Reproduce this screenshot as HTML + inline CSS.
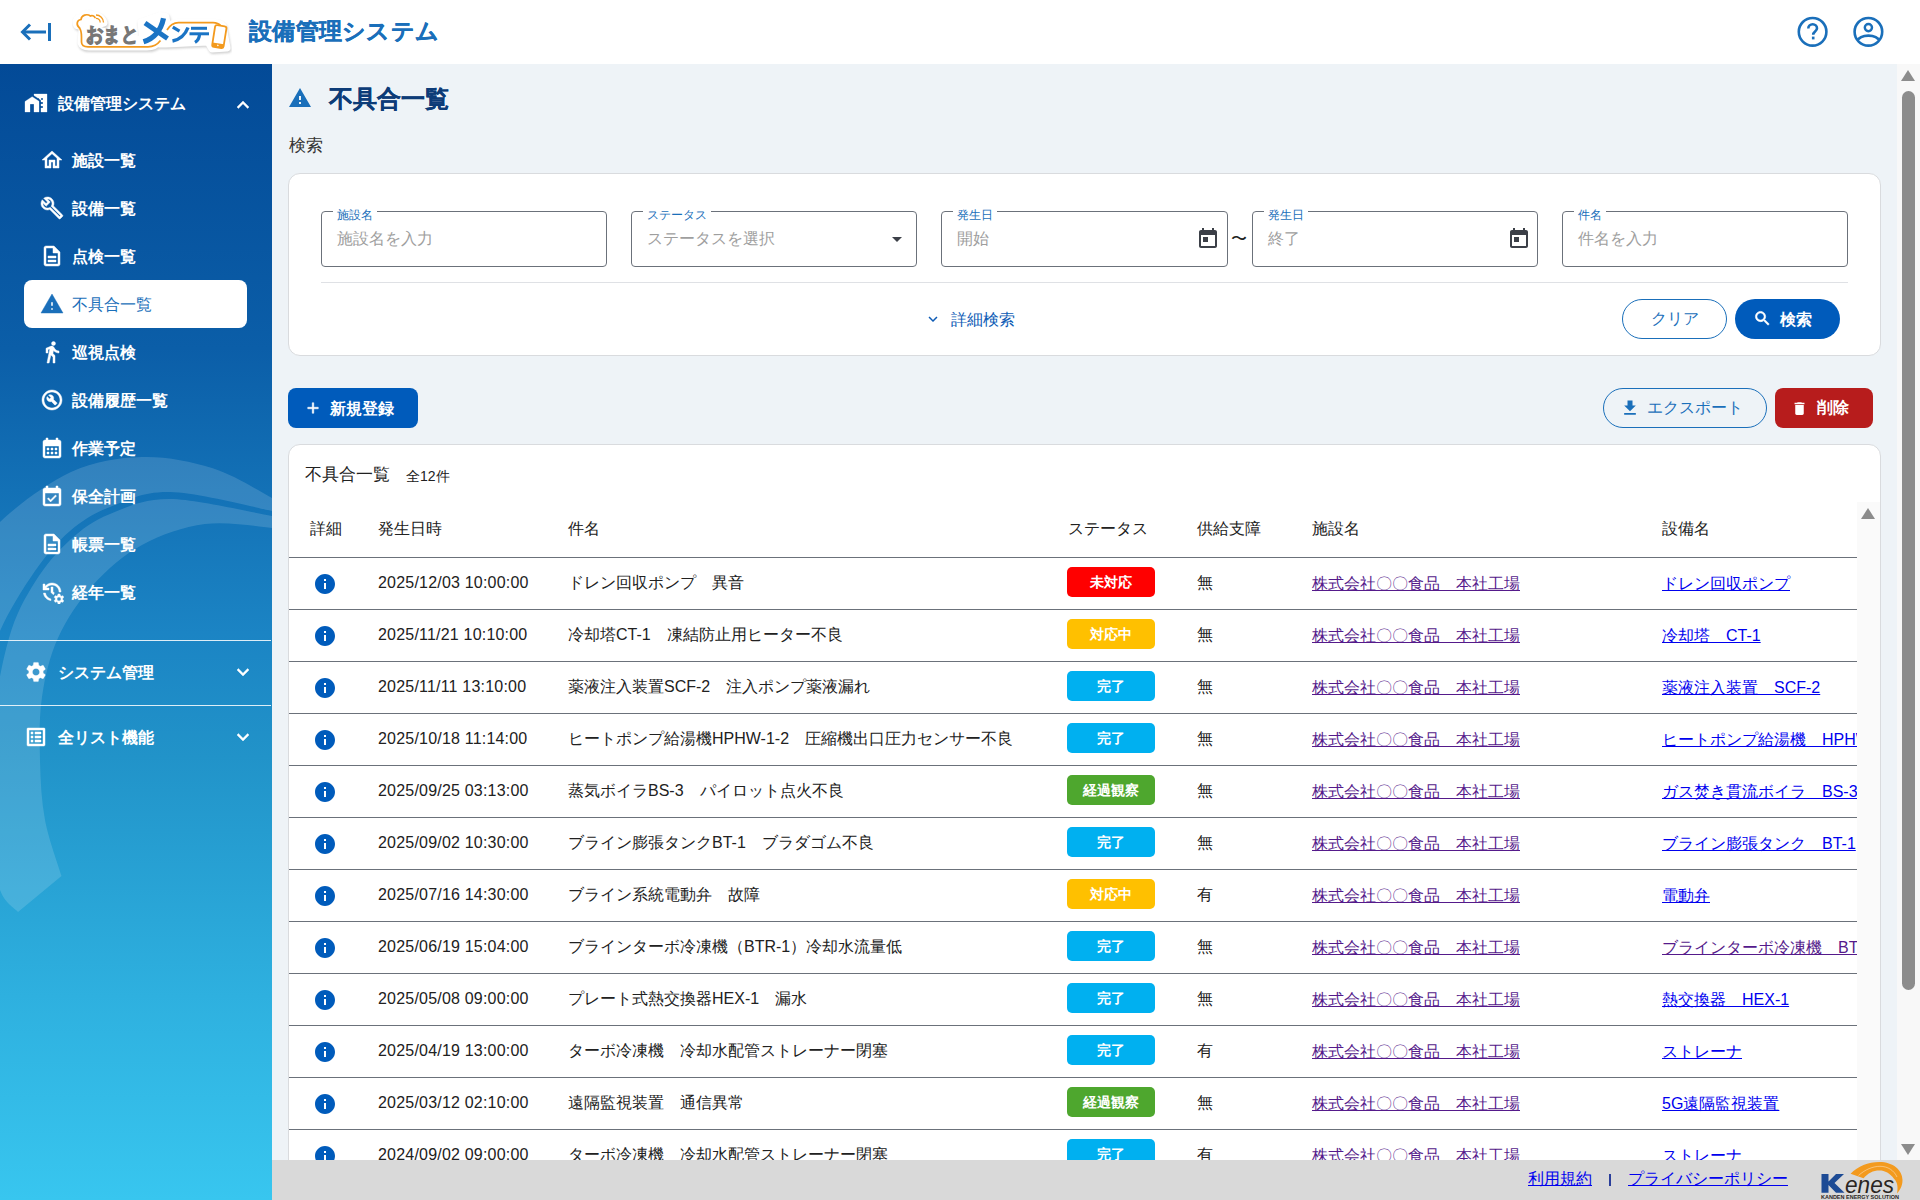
<!DOCTYPE html>
<html lang="ja">
<head>
<meta charset="utf-8">
<style>
*{box-sizing:border-box;margin:0;padding:0}
html,body{width:1920px;height:1200px;overflow:hidden;background:#fff}
body{font-family:"Liberation Sans",sans-serif;color:#212121;position:relative;font-size:16px}
.abs{position:absolute}
svg{display:block}
#hdr{position:absolute;left:0;top:0;width:1920px;height:64px;background:#fff}
#hdr .title{position:absolute;left:249px;top:16px;font-size:23.4px;letter-spacing:0.3px;line-height:30px;font-weight:bold;color:#1a6fba;white-space:nowrap;-webkit-text-stroke:0.35px #1a6fba}
#side{position:absolute;left:0;top:64px;width:272px;height:1136px;overflow:hidden;
 background:linear-gradient(180deg,#034a97 0%,#0b5ea8 25%,#1b84c4 50%,#2193c9 61%,#2eb0df 82%,#38c6ef 100%)}
#side .it,#side .grp{position:absolute;left:0;width:272px;height:48px;color:#fff;font-size:16px;line-height:48px;white-space:nowrap}
#side .it span{position:absolute;left:72px;top:1px;font-weight:bold}
#side .grp span{position:absolute;left:58px;top:1px;font-weight:bold}
#side .it.on span{color:#1a6fba;font-weight:normal}
#side .sel{position:absolute;left:24px;top:216px;width:223px;height:48px;background:#fff;border-radius:8px}
#side .sep{position:absolute;left:0;width:271px;height:1px;background:rgba(255,255,255,.85)}
#main{position:absolute;left:272px;top:64px;width:1625px;height:1096px;background:#eef3f7}
#pscroll{position:absolute;left:1897px;top:64px;width:23px;height:1096px;background:#f8f8f8}
#pscroll .thumb{position:absolute;left:5px;top:27px;width:13px;height:899px;background:#8c8c8c;border-radius:7px}
#pscroll .up{position:absolute;left:4px;top:6px;width:0;height:0;border-left:7.5px solid transparent;border-right:7.5px solid transparent;border-bottom:11px solid #8c8c8c}
#pscroll .dn{position:absolute;left:4px;top:1080px;width:0;height:0;border-left:7.5px solid transparent;border-right:7.5px solid transparent;border-top:11px solid #8c8c8c}
#foot{position:absolute;left:272px;top:1160px;width:1648px;height:40px;background:#d9d9d9}
.h1{position:absolute;left:329px;top:84px;font-size:24px;line-height:30px;font-weight:bold;color:#0d3c78;white-space:nowrap;-webkit-text-stroke:0.2px #0d3c78}
.card{position:absolute;background:#fff;border:1px solid #d9dbde;border-radius:12px}
.fld{position:absolute;top:211px;height:56px;width:286px;border:1px solid #6b717a;border-radius:4px}
.fld .lb{position:absolute;left:11px;top:-4px;padding:0 4px;background:#fff;font-size:12px;line-height:14px;color:#1a6fba;white-space:nowrap}
.fld .ph{position:absolute;left:15px;top:17px;font-size:16px;line-height:20px;color:#9e9e9e;white-space:nowrap}
.btn{position:absolute;height:40px;line-height:40px;font-size:16px;white-space:nowrap;font-weight:bold}
.tbl{position:absolute;left:289px;top:502px;width:1568px;height:700px;overflow:hidden}
.th{position:absolute;font-size:16px;line-height:20px;color:#212121;white-space:nowrap}
.row{position:absolute;left:0;width:1568px;height:52px;border-top:1px solid #6b717a}
.row .c{position:absolute;top:15px;font-size:16px;line-height:20px;white-space:nowrap}
.badge{position:absolute;left:778px;top:9px;width:88px;height:30px;border-radius:5px;color:#fff;font-size:14px;line-height:30px;text-align:center;font-weight:bold}
a{color:#0000ee;text-decoration:underline}
a.v{color:#551a8b}

</style>
</head>
<body>

<div id="hdr">
<svg class="abs" style="left:18px;top:20px" width="36" height="24" viewBox="0 0 36 24">
<path d="M5 12H28" stroke="#1a6fba" stroke-width="3" fill="none"/>
<path d="M12 4.5L4.5 12L12 19.5" stroke="#1a6fba" stroke-width="3" fill="none"/>
<rect x="30" y="3" width="3" height="18" fill="#1a6fba"/></svg>
<svg class="abs" style="left:72px;top:8px" width="160" height="50" viewBox="72 8 160 50">
<defs><filter id="lsh" x="-10%" y="-20%" width="120%" height="150%"><feGaussianBlur stdDeviation="0.9"/></filter></defs>
<g transform="translate(0.8,1.6)" filter="url(#lsh)" fill="#cfcfcf" stroke="#cfcfcf" stroke-width="7" stroke-linejoin="round">
<path d="M77 25.5C74 21 78 16.5 82 18C83 13.5 89 12 93 15C97 14 103 18 104 23L82 30L81 43C82 46 85 47 89 47H147C153 47 157 45 160 41L166 30C169 25 172 22.6 178 22.6H214C218 22.6 221 24 223 26L227 48L212 49L208 42L166 44L160 44Z"/>
<path d="M141 22L160 15.5L166 16.5L169 38L143 44Z"/>
</g>
<g fill="#fff" stroke="#fff" stroke-width="7" stroke-linejoin="round">
<path d="M77 25.5C74 21 78 16.5 82 18C83 13.5 89 12 93 15C97 14 103 18 104 23L82 30L81 43C82 46 85 47 89 47H147C153 47 157 45 160 41L166 30C169 25 172 22.6 178 22.6H214C218 22.6 221 24 223 26L227 48L212 49L208 42L166 44L160 44Z"/>
<path d="M141 22L160 15.5L166 16.5L169 38L143 44Z"/>
</g>
<path d="M79.5 28C76 25 76.5 20 81 19.5C81.5 15 87 13.5 90.5 16C92 15 94 16 95 17.5" stroke="#f39a1e" stroke-width="1.7" fill="none" stroke-linecap="round"/>
<path d="M79.5 28C81 30 81.5 33 81.5 37V42C81.5 45 84 46.8 88 46.8H148C154 46.8 157.5 44.5 160.5 40.5" stroke="#f39a1e" stroke-width="1.7" fill="none"/>
<path d="M167 30C170 25 173 22.6 178.5 22.6H213C216 22.6 219 23.6 221 26" stroke="#f39a1e" stroke-width="1.7" fill="none"/>
<path d="M96 15A7.5 7.5 0 0 1 103.5 22.5M96 18.3A4.2 4.2 0 0 1 100.2 22.5" stroke="#f39a1e" stroke-width="1.3" fill="none"/>
<g transform="rotate(9 219 37)"><rect x="213.5" y="25.5" width="11.5" height="22" rx="2" fill="#fff" stroke="#f39a1e" stroke-width="1.8"/><rect x="213.5" y="43.5" width="11.5" height="4" fill="#f39a1e"/><circle cx="219.2" cy="45.5" r="0.8" fill="#fff"/></g>
<text x="85.5" y="40.5" font-family="Liberation Sans" font-size="19.5" font-weight="bold" fill="#777" stroke="#777" stroke-width="1.2" textLength="52.5" lengthAdjust="spacingAndGlyphs">おまと</text>
<g stroke="#1b74c5" fill="none" stroke-linecap="butt">
<path d="M163.5 18.2C161 30 154 38.5 143.5 41.8" stroke-width="5.2"/>
<path d="M145 23L167.5 38.5" stroke-width="5"/>
<path d="M172.8 27.2L179.5 31.2" stroke-width="3.2"/>
<path d="M172.5 41C180 39.5 185 35.5 188 27.5" stroke-width="3.4"/>
<path d="M191 28.3H207" stroke-width="3"/>
<path d="M189.5 33.8H209" stroke-width="3"/>
<path d="M199.5 34C199.5 38 198 40.5 195 42.3" stroke-width="3.2"/>
</g>
</svg>

<div class="title">設備管理システム</div>
<svg class="abs" style="left:1796px;top:16px" width="34" height="34" viewBox="0 0 34 34">
<circle cx="16.6" cy="15.8" r="13.8" stroke="#1a6fba" stroke-width="2.6" fill="none"/>
<path d="M12.3 12.6c0-2.6 2-4.4 4.4-4.4s4.3 1.8 4.3 4.1c0 3.2-3.8 3.2-3.8 6.4" stroke="#1a6fba" stroke-width="2.6" fill="none"/>
<rect x="15.9" y="20.6" width="2.6" height="2.8" fill="#1a6fba"/></svg>
<svg class="abs" style="left:1852px;top:16px" width="34" height="34" viewBox="0 0 34 34">
<defs><clipPath id="uc"><circle cx="16.4" cy="15.8" r="13.8"/></clipPath></defs>
<circle cx="16.4" cy="15.8" r="13.8" stroke="#1a6fba" stroke-width="2.6" fill="none"/>
<circle cx="16.4" cy="11.6" r="3.6" stroke="#1a6fba" stroke-width="2.4" fill="none"/>
<path d="M4.5 25.5C7 21 11.5 19.6 16.4 19.6S25.8 21 28.3 25.5" stroke="#1a6fba" stroke-width="2.6" fill="none" clip-path="url(#uc)"/></svg>
</div>
<div id="side">
<svg class="abs" style="left:0;top:0" width="272" height="1136" viewBox="0 64 272 1136"><g fill="rgba(255,255,255,0.14)"><path d="M300.0 516.0C295.3 513.0 286.7 506.0 272.0 498.0C257.3 490.0 233.7 474.8 212.0 468.0C190.3 461.2 165.5 456.3 142.0 457.0C118.5 457.7 94.7 461.2 71.0 472.0C47.3 482.8 16.0 506.5 0.0 522.0C-16.0 537.5 -20.8 557.8 -25.0 565.0L-12 680C-10.0 671.8 -7.8 649.2 0.0 631.0C7.8 612.8 23.3 587.7 35.0 571.0C46.7 554.3 57.5 541.7 70.0 531.0C82.5 520.3 93.3 513.5 110.0 507.0C126.7 500.5 143.0 491.3 170.0 492.0C197.0 492.7 250.3 506.3 272.0 511.0C293.7 515.7 295.3 518.5 300.0 520.0Z"/><path d="M300.0 522.0C295.3 521.0 293.7 519.8 272.0 516.0C250.3 512.2 197.0 499.3 170.0 499.0C143.0 498.7 126.7 507.2 110.0 514.0C93.3 520.8 82.5 528.7 70.0 540.0C57.5 551.3 45.2 565.7 35.0 582.0C24.8 598.3 16.2 613.3 9.0 638.0C1.8 662.7 -4.5 698.0 -8.0 730.0C-11.5 762.0 -13.3 803.3 -12.0 830.0C-10.7 856.7 -5.0 876.3 0.0 890.0C5.0 903.7 15.0 908.3 18.0 912.0L61.5 876C58.8 866.7 48.6 839.3 45.0 820.0C41.4 800.7 40.5 780.5 40.0 760.0C39.5 739.5 39.0 717.3 42.0 697.0C45.0 676.7 49.5 656.7 58.0 638.0C66.5 619.3 79.0 600.5 93.0 585.0C107.0 569.5 123.3 555.2 142.0 545.0C160.7 534.8 183.3 526.8 205.0 524.0C226.7 521.2 256.2 526.3 272.0 528.0C287.8 529.7 295.3 533.0 300.0 534.0Z"/></g></svg>
<div class="sel"></div>
<div class="grp" style="top:15px"><svg class="abs" style="left:24px;top:12px;stroke:#fff;stroke-width:0.3" width="24" height="24" viewBox="0 0 24 24" fill="#fff"><path d="M8.17 5.7L1 10.48V21h5v-8h4v8h5V10.25z"/><path d="M10 3v1.51l2 1.33L13.73 7H15v.85l2 1.34V11h2v2h-2v2h2v2h-2v4h6V3H10zm9 6h-2V7h2v2z"/></svg><span>設備管理システム</span><svg class="abs" style="left:231px;top:13.5px;stroke:#fff;stroke-width:0.4" width="24" height="24" viewBox="0 0 24 24" fill="#fff"><path d="M12 8l-6 6 1.41 1.41L12 10.83l4.59 4.58L18 14z"/></svg></div>
<div class="it" style="top:72px"><svg class="abs" style="left:40px;top:12px;stroke:#fff;stroke-width:0.45" width="24" height="24" viewBox="0 0 24 24" fill="#fff"><path d="M12 5.69l5 4.5V18h-2v-6H9v6H7v-7.81l5-4.5M12 3L2 12h3v8h6v-6h2v6h6v-8h3L12 3z"/></svg><span>施設一覧</span></div>
<div class="it" style="top:120px"><svg class="abs" style="left:40px;top:12px;stroke:#fff;stroke-width:0.45" width="24" height="24" viewBox="0 0 24 24" fill="#fff"><path d="M22.61 18.99l-9.08-9.08c.93-2.34.45-5.1-1.44-7C9.79.61 6.21.4 3.66 2.26L7.5 6.11 6.08 7.52 2.25 3.69C.39 6.23.6 9.82 2.9 12.11c1.86 1.86 4.57 2.35 6.88 1.48l9.11 9.11c.39.39 1.02.39 1.41 0l2.3-2.3c.4-.38.4-1.01.01-1.41zm-3 1.6l-9.46-9.46c-.61.45-1.29.72-2 .82-1.36.2-2.79-.21-3.83-1.25C3.37 9.76 2.93 8.5 3 7.26l3.09 3.09 4.24-4.24-3.09-3.09c1.24-.07 2.49.37 3.44 1.31 1.08 1.08 1.49 2.57 1.24 3.96-.12.71-.42 1.37-.88 1.96l9.45 9.45-.88.89z"/></svg><span>設備一覧</span></div>
<div class="it" style="top:168px"><svg class="abs" style="left:40px;top:12px;stroke:#fff;stroke-width:0.45" width="24" height="24" viewBox="0 0 24 24" fill="#fff"><path d="M8 16h8v2H8zm0-4h8v2H8zm6-10H6c-1.1 0-2 .9-2 2v16c0 1.1.89 2 1.99 2H18c1.1 0 2-.9 2-2V8l-6-6zm4 18H6V4h7v5h5v11z"/></svg><span>点検一覧</span></div>
<div class="it on" style="top:216px"><svg class="abs" style="left:40px;top:12px;stroke:#1a6fba;stroke-width:0.45" width="24" height="24" viewBox="0 0 24 24" fill="#1a6fba"><path d="M1 21h22L12 2 1 21zm12-3h-2v-2h2v2zm0-4h-2v-4h2v4z"/></svg><span>不具合一覧</span></div>
<div class="it" style="top:264px"><svg class="abs" style="left:40px;top:12px;stroke:#fff;stroke-width:0.45" width="24" height="24" viewBox="0 0 24 24" fill="#fff"><path d="M13.5 5.5c1.1 0 2-.9 2-2s-.9-2-2-2-2 .9-2 2 .9 2 2 2zM9.8 8.9L7 23h2.1l1.8-8 2.1 2v6h2v-7.5l-2.1-2 .6-3C14.8 12 16.8 13 19 13v-2c-1.9 0-3.5-1-4.3-2.4l-1-1.6c-.4-.6-1-1-1.7-1-.3 0-.5.1-.8.1L6 8.3V13h2V9.6l1.8-.7"/></svg><span>巡視点検</span></div>
<div class="it" style="top:312px"><svg class="abs" style="left:40px;top:12px;stroke:#fff;stroke-width:0.45" width="24" height="24" viewBox="0 0 24 24" fill="#fff"><path d="M12 2C6.48 2 2 6.48 2 12s4.48 10 10 10 10-4.48 10-10S17.52 2 12 2zm0 18c-4.41 0-8-3.59-8-8s3.59-8 8-8 8 3.59 8 8-3.59 8-8 8z"/><path d="M13.49 11.38c.43-1.22.17-2.64-.81-3.62-1.11-1.11-2.79-1.3-4.1-.59l2.35 2.35-1.41 1.41-2.35-2.35c-.71 1.32-.52 2.99.59 4.1.98.98 2.4 1.24 3.62.81l3.41 3.41c.2.2.51.2.71 0l1.4-1.4c.2-.2.2-.51 0-.71l-3.41-3.41z"/></svg><span>設備履歴一覧</span></div>
<div class="it" style="top:360px"><svg class="abs" style="left:40px;top:12px;stroke:#fff;stroke-width:0.45" width="24" height="24" viewBox="0 0 24 24" fill="#fff"><path d="M19 4h-1V2h-2v2H8V2H6v2H5c-1.11 0-1.99.9-1.99 2L3 20c0 1.1.89 2 2 2h14c1.1 0 2-.9 2-2V6c0-1.1-.9-2-2-2zm0 16H5V10h14v10zM9 14H7v-2h2v2zm4 0h-2v-2h2v2zm4 0h-2v-2h2v2zm-8 4H7v-2h2v2zm4 0h-2v-2h2v2zm4 0h-2v-2h2v2z"/></svg><span>作業予定</span></div>
<div class="it" style="top:408px"><svg class="abs" style="left:40px;top:12px;stroke:#fff;stroke-width:0.45" width="24" height="24" viewBox="0 0 24 24" fill="#fff"><path d="M16.53 12.06L15.47 11l-4.88 4.88-2.12-2.12-1.06 1.06L10.59 18l5.94-5.94zM19 4h-1V2h-2v2H8V2H6v2H5c-1.11 0-1.99.9-1.99 2L3 20c0 1.1.89 2 2 2h14c1.1 0 2-.9 2-2V6c0-1.1-.9-2-2-2zm0 16H5V9h14v11z"/></svg><span>保全計画</span></div>
<div class="it" style="top:456px"><svg class="abs" style="left:40px;top:12px;stroke:#fff;stroke-width:0.45" width="24" height="24" viewBox="0 0 24 24" fill="#fff"><path d="M8 16h8v2H8zm0-4h8v2H8zm6-10H6c-1.1 0-2 .9-2 2v16c0 1.1.89 2 1.99 2H18c1.1 0 2-.9 2-2V8l-6-6zm4 18H6V4h7v5h5v11z"/></svg><span>帳票一覧</span></div>
<div class="it" style="top:504px"><svg class="abs" style="left:40px;top:12px;stroke:#fff;stroke-width:0.45" width="24" height="24" viewBox="0 0 24 24" fill="#fff"><path d="M22.69 18.37l1.14-1-1-1.73-1.45.49c-.32-.27-.68-.48-1.08-.63L20 14h-2l-.3 1.49c-.4.15-.76.36-1.08.63l-1.45-.49-1 1.73 1.14 1c-.08.5-.08.76 0 1.26l-1.14 1 1 1.73 1.45-.49c.32.27.68.48 1.08.63L18 24h2l.3-1.49c.4-.15.76-.36 1.08-.63l1.45.49 1-1.73-1.14-1c.08-.51.08-.77 0-1.27zM19 21c-1.1 0-2-.9-2-2s.9-2 2-2 2 .9 2 2-.9 2-2 2zM11 7v5.41l2.36 2.36 1.04-1.79-1.4-1.39V7h-2zm10 5c0-4.97-4.03-9-9-9-2.83 0-5.35 1.32-7 3.36V4H3v6h6V8H6.26C7.53 6.19 9.63 5 12 5c3.86 0 7 3.14 7 7h2zm-10.14 6.91c-2.8-.63-4.97-2.94-5.39-5.82H3.45c.45 3.95 3.59 7.08 7.54 7.49l-.13-1.67z"/></svg><span>経年一覧</span></div>
<div class="sep" style="top:576px"></div>
<div class="grp" style="top:584px"><svg class="abs" style="left:24px;top:12px;stroke:#fff;stroke-width:0.3" width="24" height="24" viewBox="0 0 24 24" fill="#fff"><path d="M19.14 12.94c.04-.3.06-.61.06-.94 0-.32-.02-.64-.07-.94l2.03-1.58c.18-.14.23-.41.12-.61l-1.92-3.32c-.12-.22-.37-.29-.59-.22l-2.39.96c-.5-.38-1.03-.7-1.62-.94l-.36-2.54c-.04-.24-.24-.41-.48-.41h-3.84c-.24 0-.43.17-.47.41l-.36 2.54c-.59.24-1.13.57-1.62.94l-2.39-.96c-.22-.08-.47 0-.59.22L2.74 8.87c-.12.21-.08.47.12.61l2.03 1.58c-.05.3-.09.63-.09.94s.02.64.07.94l-2.03 1.58c-.18.14-.23.41-.12.61l1.92 3.32c.12.22.37.29.59.22l2.39-.96c.5.38 1.03.7 1.62.94l.36 2.54c.05.24.24.41.48.41h3.84c.24 0 .44-.17.47-.41l.36-2.54c.59-.24 1.13-.56 1.62-.94l2.39.96c.22.08.47 0 .59-.22l1.92-3.32c.12-.22.07-.47-.12-.61l-2.01-1.58zM12 15.6c-1.98 0-3.6-1.62-3.6-3.6s1.62-3.6 3.6-3.6 3.6 1.62 3.6 3.6-1.62 3.6-3.6 3.6z"/></svg><span>システム管理</span><svg class="abs" style="left:231px;top:12px;stroke:#fff;stroke-width:0.4" width="24" height="24" viewBox="0 0 24 24" fill="#fff"><path d="M16.59 8.59L12 13.17 7.41 8.59 6 10l6 6 6-6z"/></svg></div>
<div class="sep" style="top:641px"></div>
<div class="grp" style="top:649px"><svg class="abs" style="left:24px;top:12px;stroke:#fff;stroke-width:0.45" width="24" height="24" viewBox="0 0 24 24" fill="#fff"><path d="M11 7h6v2h-6zm0 4h6v2h-6zm0 4h6v2h-6zM7 7h2v2H7zm0 4h2v2H7zm0 4h2v2H7zM20.1 3H3.9c-.5 0-.9.4-.9.9v16.2c0 .4.4.9.9.9h16.2c.4 0 .9-.5.9-.9V3.9c0-.5-.5-.9-.9-.9zM19 19H5V5h14v14z"/></svg><span>全リスト機能</span><svg class="abs" style="left:231px;top:12px;stroke:#fff;stroke-width:0.4" width="24" height="24" viewBox="0 0 24 24" fill="#fff"><path d="M16.59 8.59L12 13.17 7.41 8.59 6 10l6 6 6-6z"/></svg></div>
</div>
<div id="main"></div>
<svg class="abs" style="left:288px;top:86px" width="24" height="24" viewBox="0 0 24 24" fill="#1a6fba"><path d="M1 21h22L12 2 1 21zm12-3h-2v-2h2v2zm0-4h-2v-4h2v4z"/></svg>
<div class="h1">不具合一覧</div>
<div class="abs" style="left:289px;top:134px;font-size:17px;line-height:24px;color:#333">検索</div>
<div class="card" style="left:288px;top:173px;width:1593px;height:183px"></div>
<div class="fld" style="left:321px;width:286px"><div class="lb">施設名</div><div class="ph">施設名を入力</div></div>
<div class="fld" style="left:631px;width:286px"><div class="lb">ステータス</div><div class="ph">ステータスを選択</div><svg class="abs" style="left:253px;top:15px" width="24" height="24" viewBox="0 0 24 24" fill="#3c4048"><path d="M7 10l5 5 5-5z"/></svg></div>
<div class="fld" style="left:941px;width:287px"><div class="lb">発生日</div><div class="ph">開始</div><svg class="abs" style="left:254px;top:15px" width="24" height="24" viewBox="0 0 24 24" fill="#3c4048"><path d="M19 3h-1V1h-2v2H8V1H6v2H5c-1.11 0-1.99.9-1.99 2L3 19c0 1.1.89 2 2 2h14c1.1 0 2-.9 2-2V5c0-1.1-.9-2-2-2zm0 16H5V8h14v11zM7 10h5v5H7z"/></svg></div>
<div class="fld" style="left:1252px;width:286px"><div class="lb">発生日</div><div class="ph">終了</div><svg class="abs" style="left:254px;top:15px" width="24" height="24" viewBox="0 0 24 24" fill="#3c4048"><path d="M19 3h-1V1h-2v2H8V1H6v2H5c-1.11 0-1.99.9-1.99 2L3 19c0 1.1.89 2 2 2h14c1.1 0 2-.9 2-2V5c0-1.1-.9-2-2-2zm0 16H5V8h14v11zM7 10h5v5H7z"/></svg></div>
<div class="fld" style="left:1562px;width:286px"><div class="lb">件名</div><div class="ph">件名を入力</div></div>
<div class="abs" style="left:1231px;top:229px;font-size:16px;line-height:20px;color:#212121">〜</div>
<div class="abs" style="left:321px;top:282px;width:1527px;height:1px;background:#dfe1e5"></div>
<svg class="abs" style="left:924px;top:310px" width="18" height="18" viewBox="0 0 24 24" fill="#0d5bb5"><path d="M16.59 8.59L12 13.17 7.41 8.59 6 10l6 6 6-6z"/></svg>
<div class="abs" style="left:951px;top:310px;font-size:16px;line-height:20px;color:#0d5bb5;white-space:nowrap">詳細検索</div>
<div class="btn" style="left:1622px;top:299px;width:105px;border:1px solid #1a6fba;border-radius:20px;color:#1a6fba;text-align:center;font-weight:normal;line-height:38px">クリア</div>
<div class="btn" style="left:1735px;top:299px;width:105px;background:#005bbb;border-radius:20px;color:#fff"><svg class="abs" style="left:18px;top:10px;stroke:#fff;stroke-width:0.7" width="19" height="19" viewBox="0 0 24 24" fill="#fff"><path d="M15.5 14h-.79l-.28-.27C15.41 12.59 16 11.11 16 9.5 16 5.91 13.09 3 9.5 3S3 5.91 3 9.5 5.91 16 9.5 16c1.61 0 3.09-.59 4.23-1.57l.27.28v.79l5 4.99L20.49 19l-4.99-5zm-6 0C7.01 14 5 11.99 5 9.5S7.01 5 9.5 5 14 7.01 14 9.5 11.99 14 9.5 14z"/></svg><span class="abs" style="left:45px;top:1px">検索</span></div>
<div class="btn" style="left:288px;top:388px;width:130px;background:#005bbb;border-radius:8px;color:#fff"><svg class="abs" style="left:15.5px;top:11px;stroke:#fff;stroke-width:0.7" width="18" height="18" viewBox="0 0 24 24" fill="#fff"><path d="M19 13h-6v6h-2v-6H5v-2h6V5h2v6h6v2z"/></svg><span class="abs" style="left:42px;top:1px">新規登録</span></div>
<div class="btn" style="left:1603px;top:388px;width:164px;border:1px solid #1a6fba;border-radius:20px;color:#1a6fba;font-weight:normal"><svg class="abs" style="left:16px;top:9px" width="20" height="20" viewBox="0 0 24 24" fill="#1a6fba"><path d="M19 9h-4V3H9v6H5l7 7 7-7zM5 18v2h14v-2H5z"/></svg><span class="abs" style="left:43px;top:-1px">エクスポート</span></div>
<div class="btn" style="left:1775px;top:388px;width:98px;background:#b71c1c;border-radius:8px;color:#fff"><svg class="abs" style="left:15.5px;top:11.5px" width="17" height="17" viewBox="0 0 24 24" fill="#fff"><path d="M6 19c0 1.1.9 2 2 2h8c1.1 0 2-.9 2-2V7H6v12zM19 4h-3.5l-1-1h-5l-1 1H5v2h14V4z"/></svg><span class="abs" style="left:42px;top:0">削除</span></div>
<div class="card" style="left:288px;top:444px;width:1593px;height:800px"></div>
<div class="abs" style="left:305px;top:463px;font-size:17px;line-height:24px;color:#212121;white-space:nowrap">不具合一覧</div>
<div class="abs" style="left:406px;top:466px;font-size:14px;line-height:20px;color:#212121;white-space:nowrap">全12件</div>
<div class="abs" style="left:1857px;top:502px;width:23px;height:700px;background:#fafafa"></div>
<div class="abs" style="left:1861px;top:508px;width:0;height:0;border-left:7.5px solid transparent;border-right:7.5px solid transparent;border-bottom:11px solid #8c8c8c"></div>
<div class="tbl">
<div class="th" style="left:21px;top:17px">詳細</div>
<div class="th" style="left:89px;top:17px">発生日時</div>
<div class="th" style="left:279px;top:17px">件名</div>
<div class="th" style="left:779px;top:17px">ステータス</div>
<div class="th" style="left:908px;top:17px">供給支障</div>
<div class="th" style="left:1023px;top:17px">施設名</div>
<div class="th" style="left:1373px;top:17px">設備名</div>
<div class="row" style="top:55px"><svg class="abs" style="left:24px;top:14px" width="24" height="24" viewBox="0 0 24 24" fill="#005bbb"><path d="M12 2C6.48 2 2 6.48 2 12s4.48 10 10 10 10-4.48 10-10S17.52 2 12 2zm1 15h-2v-6h2v6zm0-8h-2V7h2v2z"/></svg><div class="c" style="left:89px;letter-spacing:0.2px">2025/12/03 10:00:00</div><div class="c" style="left:279px">ドレン回収ポンプ　異音</div><div class="badge" style="background:#ff0000">未対応</div><div class="c" style="left:908px">無</div><div class="c" style="left:1023px;top:16px"><a class="v">株式会社〇〇食品　本社工場</a></div><div class="c" style="left:1373px;top:16px"><a>ドレン回収ポンプ</a></div></div>
<div class="row" style="top:107px"><svg class="abs" style="left:24px;top:14px" width="24" height="24" viewBox="0 0 24 24" fill="#005bbb"><path d="M12 2C6.48 2 2 6.48 2 12s4.48 10 10 10 10-4.48 10-10S17.52 2 12 2zm1 15h-2v-6h2v6zm0-8h-2V7h2v2z"/></svg><div class="c" style="left:89px;letter-spacing:0.2px">2025/11/21 10:10:00</div><div class="c" style="left:279px">冷却塔CT-1　凍結防止用ヒーター不良</div><div class="badge" style="background:#ffc000">対応中</div><div class="c" style="left:908px">無</div><div class="c" style="left:1023px;top:16px"><a class="v">株式会社〇〇食品　本社工場</a></div><div class="c" style="left:1373px;top:16px"><a>冷却塔　CT-1</a></div></div>
<div class="row" style="top:159px"><svg class="abs" style="left:24px;top:14px" width="24" height="24" viewBox="0 0 24 24" fill="#005bbb"><path d="M12 2C6.48 2 2 6.48 2 12s4.48 10 10 10 10-4.48 10-10S17.52 2 12 2zm1 15h-2v-6h2v6zm0-8h-2V7h2v2z"/></svg><div class="c" style="left:89px;letter-spacing:0.2px">2025/11/11 13:10:00</div><div class="c" style="left:279px">薬液注入装置SCF-2　注入ポンプ薬液漏れ</div><div class="badge" style="background:#00b0f0">完了</div><div class="c" style="left:908px">無</div><div class="c" style="left:1023px;top:16px"><a class="v">株式会社〇〇食品　本社工場</a></div><div class="c" style="left:1373px;top:16px"><a>薬液注入装置　SCF-2</a></div></div>
<div class="row" style="top:211px"><svg class="abs" style="left:24px;top:14px" width="24" height="24" viewBox="0 0 24 24" fill="#005bbb"><path d="M12 2C6.48 2 2 6.48 2 12s4.48 10 10 10 10-4.48 10-10S17.52 2 12 2zm1 15h-2v-6h2v6zm0-8h-2V7h2v2z"/></svg><div class="c" style="left:89px;letter-spacing:0.2px">2025/10/18 11:14:00</div><div class="c" style="left:279px">ヒートポンプ給湯機HPHW-1-2　圧縮機出口圧力センサー不良</div><div class="badge" style="background:#00b0f0">完了</div><div class="c" style="left:908px">無</div><div class="c" style="left:1023px;top:16px"><a class="v">株式会社〇〇食品　本社工場</a></div><div class="c" style="left:1373px;top:16px"><a>ヒートポンプ給湯機　HPHW-1-2</a></div></div>
<div class="row" style="top:263px"><svg class="abs" style="left:24px;top:14px" width="24" height="24" viewBox="0 0 24 24" fill="#005bbb"><path d="M12 2C6.48 2 2 6.48 2 12s4.48 10 10 10 10-4.48 10-10S17.52 2 12 2zm1 15h-2v-6h2v6zm0-8h-2V7h2v2z"/></svg><div class="c" style="left:89px;letter-spacing:0.2px">2025/09/25 03:13:00</div><div class="c" style="left:279px">蒸気ボイラBS-3　パイロット点火不良</div><div class="badge" style="background:#4ea72e">経過観察</div><div class="c" style="left:908px">無</div><div class="c" style="left:1023px;top:16px"><a class="v">株式会社〇〇食品　本社工場</a></div><div class="c" style="left:1373px;top:16px"><a>ガス焚き貫流ボイラ　BS-3</a></div></div>
<div class="row" style="top:315px"><svg class="abs" style="left:24px;top:14px" width="24" height="24" viewBox="0 0 24 24" fill="#005bbb"><path d="M12 2C6.48 2 2 6.48 2 12s4.48 10 10 10 10-4.48 10-10S17.52 2 12 2zm1 15h-2v-6h2v6zm0-8h-2V7h2v2z"/></svg><div class="c" style="left:89px;letter-spacing:0.2px">2025/09/02 10:30:00</div><div class="c" style="left:279px">ブライン膨張タンクBT-1　ブラダゴム不良</div><div class="badge" style="background:#00b0f0">完了</div><div class="c" style="left:908px">無</div><div class="c" style="left:1023px;top:16px"><a class="v">株式会社〇〇食品　本社工場</a></div><div class="c" style="left:1373px;top:16px"><a>ブライン膨張タンク　BT-1</a></div></div>
<div class="row" style="top:367px"><svg class="abs" style="left:24px;top:14px" width="24" height="24" viewBox="0 0 24 24" fill="#005bbb"><path d="M12 2C6.48 2 2 6.48 2 12s4.48 10 10 10 10-4.48 10-10S17.52 2 12 2zm1 15h-2v-6h2v6zm0-8h-2V7h2v2z"/></svg><div class="c" style="left:89px;letter-spacing:0.2px">2025/07/16 14:30:00</div><div class="c" style="left:279px">ブライン系統電動弁　故障</div><div class="badge" style="background:#ffc000">対応中</div><div class="c" style="left:908px">有</div><div class="c" style="left:1023px;top:16px"><a class="v">株式会社〇〇食品　本社工場</a></div><div class="c" style="left:1373px;top:16px"><a>電動弁</a></div></div>
<div class="row" style="top:419px"><svg class="abs" style="left:24px;top:14px" width="24" height="24" viewBox="0 0 24 24" fill="#005bbb"><path d="M12 2C6.48 2 2 6.48 2 12s4.48 10 10 10 10-4.48 10-10S17.52 2 12 2zm1 15h-2v-6h2v6zm0-8h-2V7h2v2z"/></svg><div class="c" style="left:89px;letter-spacing:0.2px">2025/06/19 15:04:00</div><div class="c" style="left:279px">ブラインターボ冷凍機（BTR-1）冷却水流量低</div><div class="badge" style="background:#00b0f0">完了</div><div class="c" style="left:908px">無</div><div class="c" style="left:1023px;top:16px"><a class="v">株式会社〇〇食品　本社工場</a></div><div class="c" style="left:1373px;top:16px"><a class=v>ブラインターボ冷凍機　BTR-1</a></div></div>
<div class="row" style="top:471px"><svg class="abs" style="left:24px;top:14px" width="24" height="24" viewBox="0 0 24 24" fill="#005bbb"><path d="M12 2C6.48 2 2 6.48 2 12s4.48 10 10 10 10-4.48 10-10S17.52 2 12 2zm1 15h-2v-6h2v6zm0-8h-2V7h2v2z"/></svg><div class="c" style="left:89px;letter-spacing:0.2px">2025/05/08 09:00:00</div><div class="c" style="left:279px">プレート式熱交換器HEX-1　漏水</div><div class="badge" style="background:#00b0f0">完了</div><div class="c" style="left:908px">無</div><div class="c" style="left:1023px;top:16px"><a class="v">株式会社〇〇食品　本社工場</a></div><div class="c" style="left:1373px;top:16px"><a>熱交換器　HEX-1</a></div></div>
<div class="row" style="top:523px"><svg class="abs" style="left:24px;top:14px" width="24" height="24" viewBox="0 0 24 24" fill="#005bbb"><path d="M12 2C6.48 2 2 6.48 2 12s4.48 10 10 10 10-4.48 10-10S17.52 2 12 2zm1 15h-2v-6h2v6zm0-8h-2V7h2v2z"/></svg><div class="c" style="left:89px;letter-spacing:0.2px">2025/04/19 13:00:00</div><div class="c" style="left:279px">ターボ冷凍機　冷却水配管ストレーナー閉塞</div><div class="badge" style="background:#00b0f0">完了</div><div class="c" style="left:908px">有</div><div class="c" style="left:1023px;top:16px"><a class="v">株式会社〇〇食品　本社工場</a></div><div class="c" style="left:1373px;top:16px"><a>ストレーナ</a></div></div>
<div class="row" style="top:575px"><svg class="abs" style="left:24px;top:14px" width="24" height="24" viewBox="0 0 24 24" fill="#005bbb"><path d="M12 2C6.48 2 2 6.48 2 12s4.48 10 10 10 10-4.48 10-10S17.52 2 12 2zm1 15h-2v-6h2v6zm0-8h-2V7h2v2z"/></svg><div class="c" style="left:89px;letter-spacing:0.2px">2025/03/12 02:10:00</div><div class="c" style="left:279px">遠隔監視装置　通信異常</div><div class="badge" style="background:#4ea72e">経過観察</div><div class="c" style="left:908px">無</div><div class="c" style="left:1023px;top:16px"><a class="v">株式会社〇〇食品　本社工場</a></div><div class="c" style="left:1373px;top:16px"><a>5G遠隔監視装置</a></div></div>
<div class="row" style="top:627px"><svg class="abs" style="left:24px;top:14px" width="24" height="24" viewBox="0 0 24 24" fill="#005bbb"><path d="M12 2C6.48 2 2 6.48 2 12s4.48 10 10 10 10-4.48 10-10S17.52 2 12 2zm1 15h-2v-6h2v6zm0-8h-2V7h2v2z"/></svg><div class="c" style="left:89px;letter-spacing:0.2px">2024/09/02 09:00:00</div><div class="c" style="left:279px">ターボ冷凍機　冷却水配管ストレーナー閉塞</div><div class="badge" style="background:#00b0f0">完了</div><div class="c" style="left:908px">有</div><div class="c" style="left:1023px;top:16px"><a class="v">株式会社〇〇食品　本社工場</a></div><div class="c" style="left:1373px;top:16px"><a>ストレーナ</a></div></div>
</div>
<div id="pscroll"><div class="up"></div><div class="thumb"></div><div class="dn"></div></div>
<div id="foot">
<a class="abs" style="left:1256px;top:9px;font-size:16px;line-height:20px;white-space:nowrap">利用規約</a>
<div class="abs" style="left:1609px;top:1174px;width:2px;height:12px;background:#2a3f9a;position:fixed"></div>
<a class="abs" style="left:1356px;top:9px;font-size:16px;line-height:20px;white-space:nowrap">プライバシーポリシー</a>
<svg class="abs" style="left:1544px;top:0" width="104" height="40" viewBox="1816 1160 104 40">
<path d="M1850.6 1173.8C1858 1166 1868 1162 1879.4 1162C1893 1162 1902.5 1170 1902.5 1180C1902.5 1186 1900 1190 1897 1193.6C1898 1188 1898 1183 1894 1178.8C1890 1173 1885 1170.4 1879.4 1170.4C1873 1170.4 1868 1173 1863.5 1178.3Z" fill="#f39a1e"/>
<path d="M1858.5 1175.5C1865 1169.5 1873 1166.3 1880 1166.3C1888 1166.3 1894 1170.5 1897 1177" stroke="#fff" stroke-width="0.5" fill="none" opacity="0.8"/>
<path d="M1821.5 1174H1828.5V1181.5L1836 1174H1844L1834.5 1183L1844.5 1192.7H1836L1828.5 1185V1192.7H1821.5Z" fill="#1d4b95"/>
<text x="1845" y="1192.8" font-family="Liberation Sans" font-size="23" font-style="italic" fill="#2a2522" textLength="49" lengthAdjust="spacingAndGlyphs">enes</text>
<text x="1821" y="1198.8" font-family="Liberation Sans" font-size="4.6" font-weight="bold" fill="#2a2522" textLength="78" lengthAdjust="spacingAndGlyphs">KANDEN ENERGY SOLUTION</text>
</svg>
</div>

</body>
</html>
